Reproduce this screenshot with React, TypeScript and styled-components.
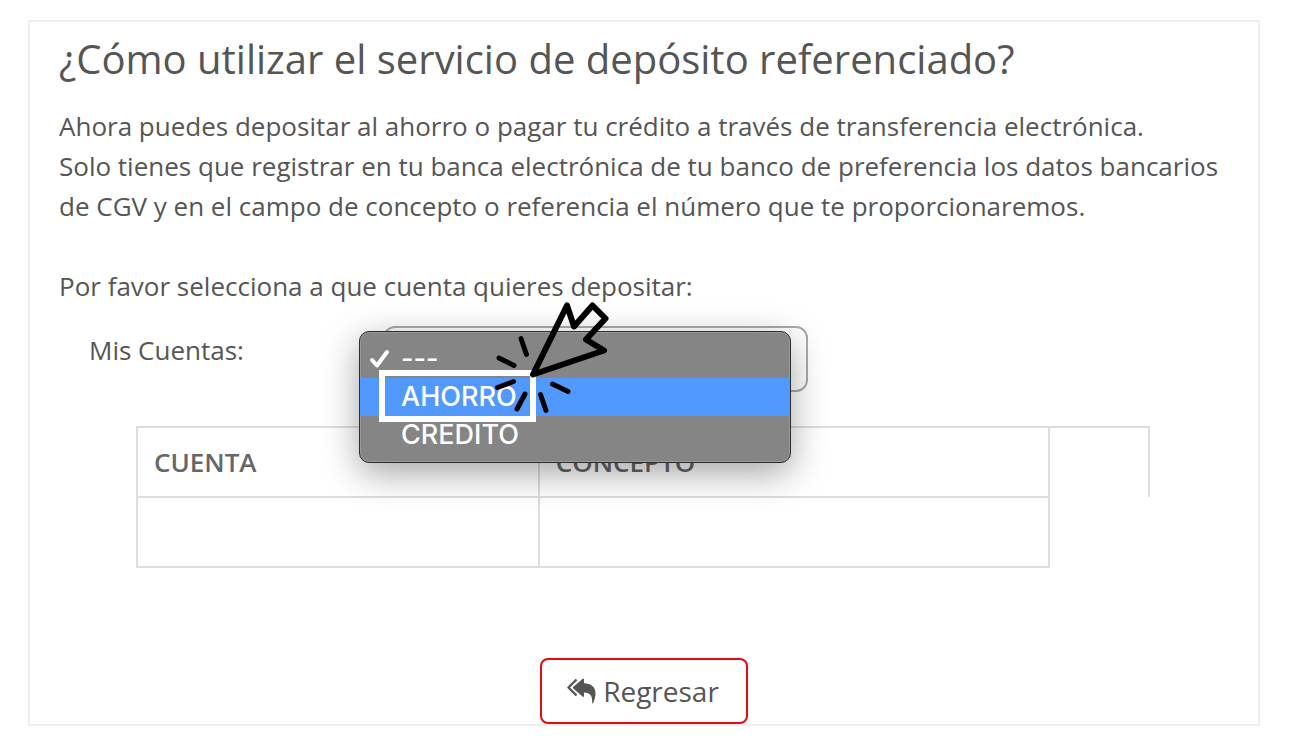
import React from 'react';
import styled, { createGlobalStyle } from 'styled-components';

const GlobalStyle = createGlobalStyle`
  * { box-sizing: border-box; }
  body {
    margin: 0;
    background: #fff;
    color: #555;
    font-family: 'Open Sans', 'Noto Sans', sans-serif;
    font-size: 26px;
    line-height: 40px;
  }
`;

const Card = styled.main`
  margin: 20px 32px 26px 28px;
  padding: 13px 29px 0;
  border: 2px solid #eee;
`;

const Title = styled.h1`
  margin: 0 0 23px;
  font-size: 40px;
  font-weight: 400;
  line-height: 48px;
`;

const Paragraph = styled.p`
  margin: 0 0 40px;
`;

const Prompt = styled.p`
  margin: 0;
`;

const Field = styled.div`
  display: grid;
  grid-template-columns: 294px minmax(0, 425px);
  align-items: start;
  margin: 20px 0 34px 30px;
`;

const FieldLabel = styled.label`
  padding-top: 4px;
`;

const SelectWrap = styled.div`
  position: relative;
`;

const Select = styled.select`
  display: block;
  width: 100%;
  height: 66px;
  padding: 0 16px;
  appearance: none;
  border: 2px solid #aaa;
  border-radius: 12px;
  background: #fff;
  color: #555;
  font: inherit;
`;

const Menu = styled.ul`
  position: absolute;
  z-index: 1;
  top: 5px;
  left: -24px;
  width: 432px;
  margin: 0;
  padding: 8px 0;
  list-style: none;
  border: 1px solid #2e2e2e;
  border-radius: 10px;
  background: #858585;
  box-shadow: inset 0 0 0 1px #999, 0 10px 36px rgba(0, 0, 0, 0.36);
  color: #fff;
  font-family: Inter, 'Liberation Sans', sans-serif;
  font-size: 27px;
  font-weight: 500;
  line-height: 36px;
`;

const Option = styled.li<{ $active?: boolean }>`
  display: grid;
  grid-template-columns: 24px 1fr;
  column-gap: 8px;
  align-items: center;
  height: 38px;
  padding-left: 9px;
  background: ${({ $active }) => ($active ? '#5199ff' : 'transparent')};
`;

const OptionText = styled.span`
  grid-column: 2;
`;

const Highlight = styled.div`
  position: absolute;
  z-index: 2;
  top: 44px;
  left: -4px;
  width: 157px;
  height: 52px;
  border: 6px solid #fff;
`;

const Pointer = styled.svg`
  position: absolute;
  z-index: 3;
  top: -36px;
  left: 107px;
`;

const TableWrap = styled.div`
  margin: 0 79px 90px 77px;
`;

const Table = styled.table`
  width: 100%;
  table-layout: fixed;
  border-collapse: collapse;
`;

const HeadCell = styled.th<{ $open?: boolean }>`
  height: 70px;
  padding: 0 16px;
  border: 2px solid #ddd;
  border-bottom-style: ${({ $open }) => ($open ? 'none' : 'solid')};
  color: #666;
  text-align: left;
  font-weight: 600;
`;

const Cell = styled.td`
  height: 70px;
  border: 2px solid #ddd;
`;

const Actions = styled.div`
  display: flex;
  justify-content: center;
`;

const BackButton = styled.button`
  display: flex;
  align-items: center;
  justify-content: center;
  gap: 6px;
  width: 208px;
  height: 66px;
  padding: 0 8px 0 6px;
  border: 2px solid #e60a0f;
  border-radius: 8px;
  background: #fff;
  color: #555;
  font: inherit;
  font-size: 28px;
`;

const CheckIcon = () => (
  <svg width="22" height="20" viewBox="0 0 22 20" fill="none" aria-hidden="true">
    <path d="M3 11 8 16.500 18 3" stroke="#fff" strokeWidth="4" strokeLinecap="round" strokeLinejoin="round" />
  </svg>
);

const ReplyAllIcon = () => (
  <svg width="30" height="26" viewBox="0 0 30 26" aria-hidden="true">
    <path d="M9.500 1.500 1.500 9.500l8 8" fill="none" stroke="#555" strokeWidth="2.400" strokeLinejoin="round" />
    <path
      d="M15.500 1c.8-.8 1.500-.5 1.500.6v3.600c7 .4 11.500 3.400 11.500 10.300 0 4-1.200 7-2.500 9.800-.3.500-.8.300-.8-.3.300-7-1.600-10-8.200-10.500v3.400c0 1.100-.7 1.400-1.500.6L6.300 10.500c-.6-.6-.6-1.200 0-1.800z"
      fill="#555"
    />
  </svg>
);

export default function App() {
  return (
    <>
      <GlobalStyle />
      <Card>
        <Title>¿Cómo utilizar el servicio de depósito referenciado?</Title>
        <Paragraph>
          Ahora puedes depositar al ahorro o pagar tu crédito a través de transferencia electrónica.
          <br />
          Solo tienes que registrar en tu banca electrónica de tu banco de preferencia los datos bancarios de CGV y en
          el campo de concepto o referencia el número que te proporcionaremos.
        </Paragraph>
        <Prompt>Por favor selecciona a que cuenta quieres depositar:</Prompt>
        <Field>
          <FieldLabel htmlFor="cuentas">Mis Cuentas:</FieldLabel>
          <SelectWrap>
            <Select id="cuentas" defaultValue="">
              <option value="" aria-label="Sin cuenta" />
            </Select>
            <Menu role="listbox" aria-label="Mis Cuentas">
              <Option role="option" aria-selected="true">
                <CheckIcon />
                <OptionText>---</OptionText>
              </Option>
              <Option role="option" aria-selected="false" $active>
                <OptionText>AHORRO</OptionText>
              </Option>
              <Option role="option" aria-selected="false">
                <OptionText>CRÉDITO</OptionText>
              </Option>
            </Menu>
            <Highlight />
            <Pointer width="120" height="130" viewBox="490 290 120 130" fill="none" aria-hidden="true">
              <g stroke="#000" strokeWidth="6" strokeLinecap="round" strokeLinejoin="round">
                <path d="M533 374.500 567 305.500 574 326.500 592.500 305.500 605.500 318.500 586 339.500 604 350.500Z" />
                <path
                  strokeWidth="5"
                  d="M521 338.500 526.500 354.500M499 358 514 365.500M497.500 387.500 513.500 381.500M525 394 517 409M540.500 394.500 546 410.500M552.500 384 568 391.500"
                />
              </g>
            </Pointer>
          </SelectWrap>
        </Field>
        <TableWrap>
          <Table>
            <colgroup>
              <col style={{ width: '39.700%' }} />
              <col style={{ width: '50.400%' }} />
              <col />
            </colgroup>
            <thead>
              <tr>
                <HeadCell scope="col">CUENTA</HeadCell>
                <HeadCell scope="col">CONCEPTO</HeadCell>
                <HeadCell as="td" $open />
              </tr>
            </thead>
            <tbody>
              <tr>
                <Cell />
                <Cell />
              </tr>
            </tbody>
          </Table>
        </TableWrap>
        <Actions>
          <BackButton type="button">
            <ReplyAllIcon />
            Regresar
          </BackButton>
        </Actions>
      </Card>
    </>
  );
}
